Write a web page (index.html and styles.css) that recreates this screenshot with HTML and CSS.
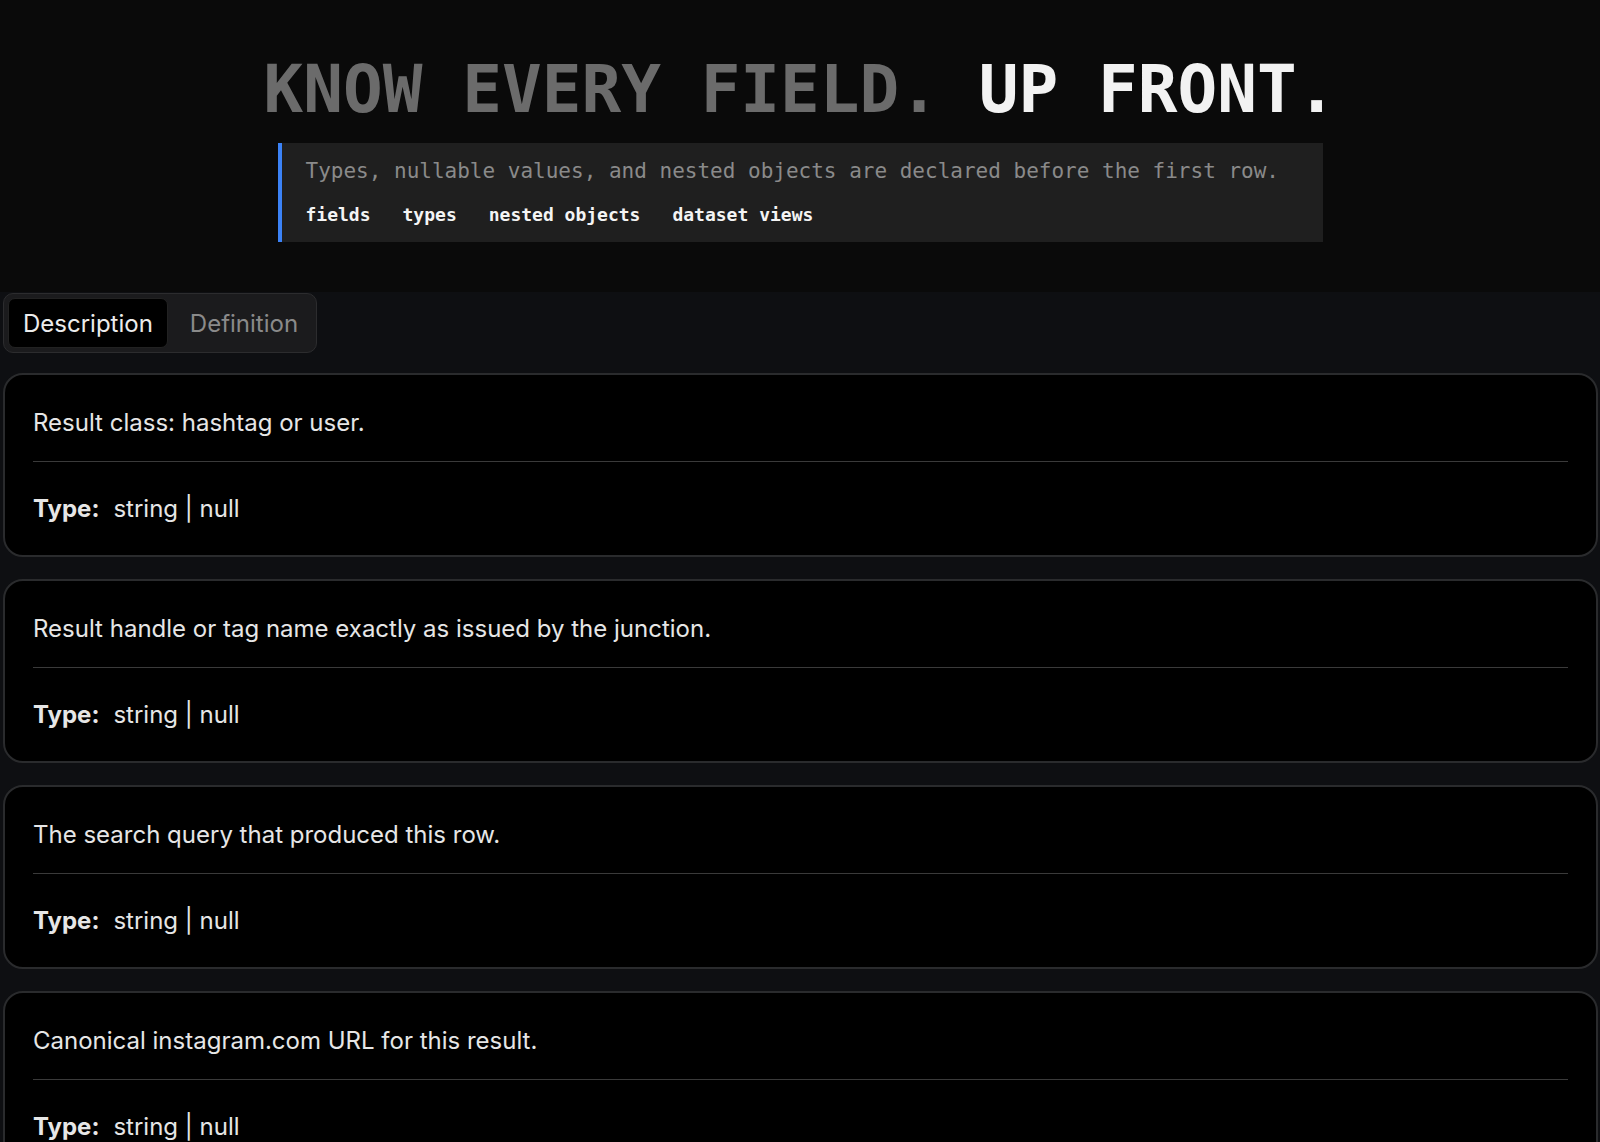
FILE: index.html
```html
<!DOCTYPE html>
<html lang="en">
<head>
<meta charset="utf-8">
<title>Know every field</title>
<link rel="stylesheet" href="styles.css">
</head>
<body>
<header class="hero">
  <h1 class="hero-title"><span class="dim">KNOW EVERY FIELD.</span> <span class="bright">UP FRONT.</span></h1>
  <div class="callout">
    <p class="callout-text">Types, nullable values, and nested objects are declared before the first row.</p>
    <ul class="tags">
      <li>fields</li>
      <li>types</li>
      <li>nested objects</li>
      <li>dataset views</li>
    </ul>
  </div>
</header>
<main class="schema">
  <div class="tabs">
    <button class="tab active">Description</button>
    <button class="tab">Definition</button>
  </div>
  <section class="card">
    <p class="desc">Result class: hashtag or user.</p>
    <div class="type-row"><span class="type-label">Type:</span><span class="type-val">string | null</span></div>
  </section>
  <section class="card">
    <p class="desc">Result handle or tag name exactly as issued by the junction.</p>
    <div class="type-row"><span class="type-label">Type:</span><span class="type-val">string | null</span></div>
  </section>
  <section class="card">
    <p class="desc">The search query that produced this row.</p>
    <div class="type-row"><span class="type-label">Type:</span><span class="type-val">string | null</span></div>
  </section>
  <section class="card">
    <p class="desc">Canonical instagram.com URL for this result.</p>
    <div class="type-row"><span class="type-label">Type:</span><span class="type-val">string | null</span></div>
  </section>
</main>
</body>
</html>
```
FILE: styles.css
```css
html, body {
  margin: 0;
  padding: 0;
}
body {
  background: #0e0f12;
  height: 1142px;
  overflow: hidden;
  font-family: Inter, "Noto Sans", sans-serif;
}
.hero {
  background: #0a0a0a;
  padding: 50px 0 50px;
  display: flex;
  flex-direction: column;
  align-items: center;
}
.hero-title {
  margin: 0;
  font-family: "DejaVu Sans Mono", monospace;
  font-size: 66px;
  line-height: 80px;
  font-weight: bold;
  white-space: nowrap;
}
.dim { color: #6b6b6b; }
.bright { color: #f2f2f2; }
.callout {
  margin-top: 13px;
  width: 1045px;
  box-sizing: border-box;
  background: #1f1f1f;
  border-left: 4px solid #3b82f6;
  padding: 13px 24px 14px;
  display: flex;
  flex-direction: column;
  gap: 16px;
}
.callout-text {
  margin: 0;
  font-family: "DejaVu Sans Mono", monospace;
  font-size: 21px;
  line-height: 30px;
  color: #8a8a8a;
}
.tags {
  list-style: none;
  margin: 0;
  padding: 0;
  display: flex;
  gap: 32px;
  font-family: "DejaVu Sans Mono", monospace;
  font-weight: bold;
  font-size: 18px;
  line-height: 26px;
  color: #f4f4f4;
}
.schema {
  padding: 1px 2px 0 3px;
  display: flex;
  flex-direction: column;
  align-items: stretch;
}
.tabs {
  align-self: flex-start;
  display: flex;
  gap: 7px;
  padding: 4px 3px 4px 4px;
  background: #1b1b1d;
  border: 1px solid #2c2c2e;
  border-radius: 10px;
  margin-bottom: 20px;
}
.tab {
  font-family: Inter, "Noto Sans", sans-serif;
  font-size: 24px;
  height: 50px;
  padding: 0 14px;
  border: 1px solid transparent;
  border-radius: 7px;
  background: transparent;
  color: #8a8a8a;
  cursor: pointer;
}
.tab.active {
  background: #000;
  border-color: #222;
  color: #ececec;
}
.card {
  background: #000;
  border: 2px solid #2a2b2d;
  border-radius: 20px;
  padding: 30px 28px 28px;
  margin-bottom: 22px;
  color: #e6e6e6;
}
.desc {
  margin: 0;
  font-size: 24px;
  line-height: 36px;
  padding-bottom: 20px;
  border-bottom: 1px solid #3a3a3a;
}
.type-row {
  padding-top: 29px;
  font-size: 24px;
  line-height: 36px;
  display: flex;
  gap: 14px;
}
.type-label {
  font-weight: bold;
  color: #e6e6e6;
}
.type-val {
  color: #e6e6e6;
}
```
